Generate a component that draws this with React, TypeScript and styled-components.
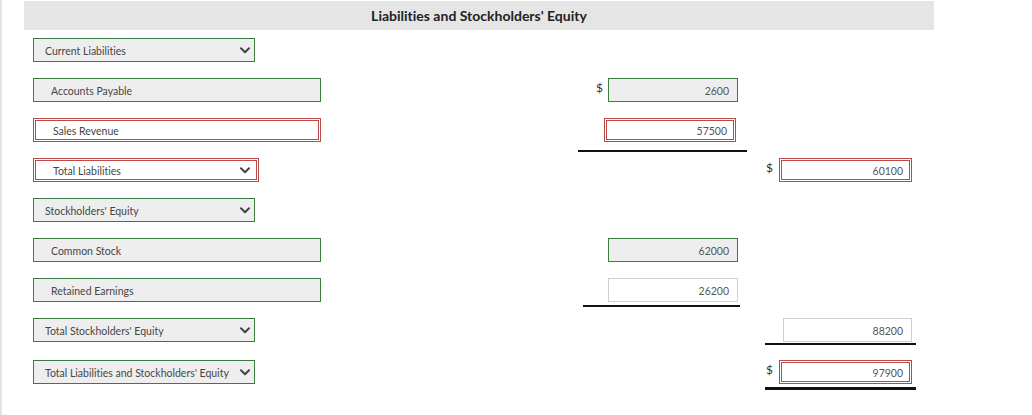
import React from 'react';
import styled, { createGlobalStyle } from 'styled-components';

const Global = createGlobalStyle`
  html, body { margin: 0; padding: 0; background: #fff; }
  body {
    font-family: Lato, "Noto Sans", sans-serif;
    font-variant-ligatures: none;
    font-feature-settings: "liga" 0, "clig" 0;
  }
`;

const GREEN = '#3b7d3b';
const RED = '#b94a48';

const Page = styled.div`
  width: 1032px;
  height: 415px;
  box-sizing: border-box;
  border-left: 2px solid #e3e3e3;
  padding: 1px 0 0 22px;
`;

const Header = styled.div`
  width: 910px;
  height: 29px;
  background: #e5e5e5;
  display: flex;
  align-items: center;
  justify-content: center;
  font-weight: 700;
  font-size: 14px;
  color: #222;
`;

const Rows = styled.div`
  margin-top: 8px;
  padding-left: 9px;
  display: flex;
  flex-direction: column;
`;

const Row = styled.div<{ $h?: number }>`
  display: grid;
  grid-template-columns: 544px 170px 170px;
  height: ${p => p.$h ?? 40}px;
  align-items: start;
`;

const SelectBox = styled.div<{ $error?: boolean }>`
  box-sizing: border-box;
  height: 24px;
  width: ${p => (p.$error ? 226 : 222)}px;
  display: flex;
  align-items: center;
  justify-content: space-between;
  padding: 2px ${p => (p.$error ? 6 : 4)}px 0 ${p => (p.$error ? 17 : 11)}px;
  background: ${p => (p.$error ? '#fff' : '#eee')};
  border: ${p => (p.$error ? `3px double ${RED}` : `1px solid ${GREEN}`)};
  font-size: 10.5px;
  color: #464646;
  white-space: nowrap;

  svg {
    margin-top: -2px;
  }
`;

const LabelBox = styled.div<{ $error?: boolean }>`
  box-sizing: border-box;
  height: 24px;
  width: 288px;
  display: flex;
  align-items: center;
  padding: 2px 0 0 17px;
  background: ${p => (p.$error ? '#fff' : '#eee')};
  border: ${p => (p.$error ? `3px double ${RED}` : `1px solid ${GREEN}`)};
  font-size: 10.5px;
  color: #464646;
`;

const AmountCell = styled.div`
  display: flex;
  flex-direction: column;
`;

const AmountLine = styled.div`
  display: grid;
  grid-template-columns: 27px 1fr;
  align-items: center;
  height: 24px;
`;

const Dollar = styled.span`
  padding-left: 19px;
  font-size: 12px;
  color: #333;
  line-height: 1;
  margin-top: -4px;
`;

type Tone = 'green' | 'red' | 'plain';

const AmountBox = styled.div<{ $tone: Tone; $w: number; $mr: number }>`
  grid-column: 2;
  justify-self: end;
  box-sizing: border-box;
  height: 24px;
  width: ${p => p.$w}px;
  margin-right: ${p => p.$mr}px;
  display: flex;
  align-items: center;
  justify-content: flex-end;
  padding: 2px ${p => (p.$tone === 'red' ? 6 : 8)}px 0 0;
  background: ${p => (p.$tone === 'green' ? '#eee' : '#fff')};
  border: ${p =>
    p.$tone === 'green'
      ? `1px solid ${GREEN}`
      : p.$tone === 'red'
      ? `3px double ${RED}`
      : '1px solid #cfcfcf'};
  font-size: 10.5px;
  color: #555;
`;

const Underline = styled.div<{ $l: number; $r: number; $gap: number; $t: number }>`
  margin: ${p => p.$gap}px ${p => p.$r}px 0 ${p => p.$l}px;
  height: ${p => p.$t}px;
  background: #111;
`;

const Chevron = () => (
  <svg width="10" height="7" viewBox="0 0 10 7" fill="none">
    <polyline points="1,1.2 5,5.2 9,1.2" stroke="#444" strokeWidth="2" strokeLinecap="round" strokeLinejoin="round" />
  </svg>
);

const Select = ({ label, error }: { label: string; error?: boolean }) => (
  <SelectBox $error={error}>
    <span>{label}</span>
    <Chevron />
  </SelectBox>
);

type AmountProps = {
  value: string;
  tone: Tone;
  col: 1 | 2;
  dollar?: boolean;
  line?: { l: number; r: number; gap: number; t: number };
};

const Amount = ({ value, tone, col, dollar, line }: AmountProps) => {
  const w = col === 1 ? (tone === 'red' ? 132 : 130) : tone === 'red' ? 133 : 129;
  const mr = col === 1 ? (tone === 'red' ? 11 : 9) : 5;
  return (
    <AmountCell>
      <AmountLine>
        {dollar ? <Dollar>$</Dollar> : null}
        <AmountBox $tone={tone} $w={w} $mr={mr}>
          {value}
        </AmountBox>
      </AmountLine>
      {line ? <Underline $l={line.l} $r={line.r} $gap={line.gap} $t={line.t} /> : null}
    </AmountCell>
  );
};

const Empty = styled.div``;

export default function App() {
  return (
    <>
      <Global />
      <Page>
        <Header>Liabilities and Stockholders' Equity</Header>
        <Rows>
          <Row>
            <Select label="Current Liabilities" />
          </Row>
          <Row>
            <LabelBox>Accounts Payable</LabelBox>
            <Amount value="2600" tone="green" col={1} dollar />
          </Row>
          <Row>
            <LabelBox $error>Sales Revenue</LabelBox>
            <Amount value="57500" tone="red" col={1} line={{ l: 1, r: 0, gap: 8, t: 2 }} />
          </Row>
          <Row>
            <Select label="Total Liabilities" error />
            <Empty />
            <Amount value="60100" tone="red" col={2} dollar />
          </Row>
          <Row>
            <Select label="Stockholders' Equity" />
          </Row>
          <Row>
            <LabelBox>Common Stock</LabelBox>
            <Amount value="62000" tone="green" col={1} />
          </Row>
          <Row>
            <LabelBox>Retained Earnings</LabelBox>
            <Amount value="26200" tone="plain" col={1} line={{ l: 6, r: 7, gap: 3, t: 2 }} />
          </Row>
          <Row $h={42}>
            <Select label="Total Stockholders' Equity" />
            <Empty />
            <Amount value="88200" tone="plain" col={2} line={{ l: 18, r: 1, gap: 1, t: 2 }} />
          </Row>
          <Row>
            <Select label="Total Liabilities and Stockholders' Equity" />
            <Empty />
            <Amount value="97900" tone="red" col={2} dollar line={{ l: 18, r: 1, gap: 3, t: 3 }} />
          </Row>
        </Rows>
      </Page>
    </>
  );
}
